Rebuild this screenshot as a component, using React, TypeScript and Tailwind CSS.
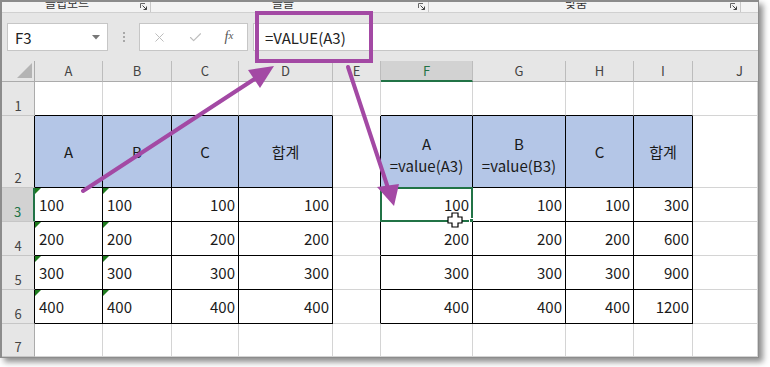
import React from "react";
import { X, Check } from "lucide-react";

const COLS = ["A", "B", "C", "D", "E", "F", "G", "H", "I", "J"];

type Cell = { t?: string; sub?: string; align?: "l" | "r" | "c"; tri?: boolean };

const inTable = (r: number, c: number) =>
  r >= 2 && r <= 6 && ((c >= 0 && c <= 3) || (c >= 5 && c <= 8));

const getCell = (r: number, c: number): Cell => {
  if (r === 2) {
    const heads: Record<number, Cell> = {
      0: { t: "A", align: "c" },
      1: { t: "B", align: "c" },
      2: { t: "C", align: "c" },
      3: { t: "합계", align: "c" },
      5: { t: "A", sub: "=value(A3)", align: "c" },
      6: { t: "B", sub: "=value(B3)", align: "c" },
      7: { t: "C", align: "c" },
      8: { t: "합계", align: "c" },
    };
    return heads[c] ?? {};
  }
  if (r >= 3 && r <= 6) {
    const v = (r - 2) * 100;
    if (c === 0 || c === 1) return { t: String(v), align: "l", tri: true };
    if (c === 2 || c === 3 || c === 5 || c === 6 || c === 7) return { t: String(v), align: "r" };
    if (c === 8) return { t: String(v * 3), align: "r" };
  }
  return {};
};

const Launcher = () => (
  <svg width="8" height="8" viewBox="0 0 8 8" className="mt-[1px]">
    <path d="M0.5 0.5 V5 M0.5 0.5 H5" stroke="#666" strokeWidth="1" fill="none" />
    <path d="M2.5 2.5 L6.5 6.5 M3.5 6.5 H6.5 V3.5" stroke="#444" strokeWidth="1" fill="none" />
  </svg>
);

const RibbonGroup = ({ w, ml, label }: { w: string; ml: string; label: string }) => (
  <div className={`${w} flex h-full items-start border-r border-r-[#c8c8c8] pr-[2px]`}>
    <div className={`${ml} h-full overflow-hidden`}>
      <div className="-mt-[5px] text-[12px] leading-[12px] text-[#333]">{label}</div>
    </div>
    <div className="ml-auto">
      <Launcher />
    </div>
  </div>
);

export default function App() {
  const rows = [0, 1, 2, 3, 4, 5, 6, 7];
  return (
    <div className="relative h-[367px] w-[770px] overflow-hidden bg-white font-['Noto_Sans_CJK_KR',sans-serif]">
      <div className="flex h-[358px] w-[759px] flex-col border-t-2 border-r border-b border-l-2 border-[#8c8c8c] bg-[#e6e6e6] shadow-[4px_4px_6px_rgba(0,0,0,0.45)]">
        {/* ribbon labels */}
        <div className="flex h-[11px] border-b border-b-[#d0d0d0] bg-[#f3f3f3]">
          <RibbonGroup w="w-[149px]" ml="ml-[43px]" label="클립보드" />
          <RibbonGroup w="w-[278px]" ml="ml-[121px]" label="글꼴" />
          <RibbonGroup w="w-[312px]" ml="ml-[136px]" label="맞춤" />
        </div>
        <div className="h-[10px]" />
        {/* formula bar */}
        <div className="flex h-[28px] items-stretch">
          <div className="ml-[5px] flex w-[101px] items-center justify-between border border-[#c6c6c6] bg-white pr-[7px] pl-[7px]">
            <span className="text-[15px] leading-none text-[#222]">F3</span>
            <svg width="8" height="5" viewBox="0 0 8 5">
              <path d="M0 0 H8 L4 4.5 Z" fill="#777" />
            </svg>
          </div>
          <div className="flex w-[31px] flex-col items-center justify-center gap-[2px]">
            <div className="h-[2px] w-[2px] bg-[#a8a8a8]" />
            <div className="h-[2px] w-[2px] bg-[#a8a8a8]" />
            <div className="h-[2px] w-[2px] bg-[#a8a8a8]" />
          </div>
          <div className="flex w-[109px] items-center border border-[#c6c6c6] bg-white">
            <div className="flex w-[38px] justify-center">
              <X size={15} strokeWidth={1.6} color="#bdbdbd" />
            </div>
            <div className="flex w-[34px] justify-center">
              <Check size={15} strokeWidth={1.8} color="#bdbdbd" />
            </div>
            <div className="flex w-[34px] justify-center font-['Liberation_Serif',serif] text-[14px] leading-none text-[#555] italic">
              f<span className="text-[11px]">x</span>
            </div>
          </div>
          <div className="ml-[5px] flex flex-1 items-center border-y border-l border-[#c6c6c6] bg-white pl-[11px]">
            <span className="text-[15px] leading-none text-[#222]">=VALUE(A3)</span>
          </div>
        </div>
        <div className="h-[10px]" />
        {/* sheet grid */}
        <div className="grid flex-1 grid-cols-[33px_68px_69px_67px_94px_48px_92px_93px_68px_59px_1fr] grid-rows-[21px_34px_72px_34px_34px_34px_34px_1fr] bg-white">
          {rows.map((r) => (
            <React.Fragment key={r}>
              {/* row header / corner */}
              {r === 0 ? (
                <div className="flex items-end justify-end border-r border-b border-r-[#ababab] border-b-[#ababab] bg-[#e6e6e6] pr-[2px] pb-[3px]">
                  <svg width="15" height="15" viewBox="0 0 15 15">
                    <path d="M15 0 V15 H0 Z" fill="#b4b4b4" />
                  </svg>
                </div>
              ) : r === 3 ? (
                <div className="flex items-end justify-center border-r-2 border-b border-r-[#217346] border-b-[#c6c6c6] bg-[#d2d2d2] pb-[3px] text-[13px] leading-none text-[#217346]">
                  {r}
                </div>
              ) : (
                <div
                  className={
                    r >= 2 && r <= 6
                      ? "flex items-end justify-center border-r border-b border-r-black border-b-[#c6c6c6] bg-[#e6e6e6] pb-[3px] text-[13px] leading-none text-[#444]"
                      : "flex items-end justify-center border-r border-b border-r-[#ababab] border-b-[#c6c6c6] bg-[#e6e6e6] pb-[3px] text-[13px] leading-none text-[#444]"
                  }
                >
                  {r}
                </div>
              )}
              {COLS.map((col, c) => {
                if (r === 0) {
                  if (col === "F")
                    return (
                      <div
                        key={col}
                        className="flex items-center justify-center border-r border-b-2 border-r-[#bcbcbc] border-b-[#217346] bg-[#d2d2d2] text-[13px] text-[#217346]"
                      >
                        {col}
                      </div>
                    );
                  return (
                    <div
                      key={col}
                      className={
                        col === "J"
                          ? "flex items-center justify-start border-b border-b-[#ababab] bg-[#e6e6e6] pl-[43px] text-[13px] text-[#444]"
                          : "flex items-center justify-center border-r border-b border-r-[#bcbcbc] border-b-[#ababab] bg-[#e6e6e6] text-[13px] text-[#444]"
                      }
                    >
                      {col}
                    </div>
                  );
                }
                const cell = getCell(r, c);
                const rb = inTable(r, c) || inTable(r, c + 1) ? "border-r-black" : "border-r-[#d4d4d4]";
                const bb = inTable(r, c) || inTable(r + 1, c) ? "border-b-black" : "border-b-[#d4d4d4]";
                const bg = r === 2 && inTable(r, c) ? "bg-[#b4c6e7]" : "bg-white";
                const al =
                  cell.align === "l"
                    ? "justify-start pl-[4px]"
                    : cell.align === "r"
                    ? "justify-end pr-[3px]"
                    : "justify-center";
                return (
                  <div
                    key={col}
                    className={`relative flex items-center border-r border-b ${rb} ${bb} ${bg} ${al} text-[15px] leading-none text-[#1a1a1a]`}
                  >
                    {cell.tri && (
                      <svg width="6" height="6" viewBox="0 0 6 6" className="absolute top-0 left-0">
                        <path d="M0 0 H6 L0 6 Z" fill="#1e7b1e" />
                      </svg>
                    )}
                    {cell.sub ? (
                      <div className="flex flex-col items-center gap-[7px] pt-[6px]">
                        <span>{cell.t}</span>
                        <span>{cell.sub}</span>
                      </div>
                    ) : (
                      cell.t
                    )}
                    {r === 3 && col === "F" && (
                      <div className="absolute -top-[1px] -left-[1px] h-[35px] w-[93px] border-2 border-[#217346]">
                        <div className="absolute -right-[4px] -bottom-[4px] h-[6px] w-[6px] border border-white bg-[#217346]" />
                      </div>
                    )}
                  </div>
                );
              })}
            </React.Fragment>
          ))}
        </div>
      </div>

      {/* annotation overlay */}
      <svg className="pointer-events-none absolute top-0 left-0" width="770" height="367" viewBox="0 0 770 367">
        <rect x="257" y="13" width="114" height="48" fill="none" stroke="#a349a4" strokeWidth="4" />
        <line x1="83" y1="191" x2="256" y2="78" stroke="#a349a4" strokeWidth="4" strokeLinecap="round" />
        <polygon points="274,66 248,70 260,88" fill="#a349a4" />
        <line x1="348" y1="67" x2="388" y2="188" stroke="#a349a4" strokeWidth="4" strokeLinecap="round" />
        <polygon points="394,206 377,187 399,184" fill="#a349a4" />
        <polygon
          points="452,213 458,213 458,217 462,217 462,223 458,223 458,227 452,227 452,223 448,223 448,217 452,217"
          fill="white"
          stroke="black"
          strokeWidth="1.2"
        />
      </svg>
    </div>
  );
}
